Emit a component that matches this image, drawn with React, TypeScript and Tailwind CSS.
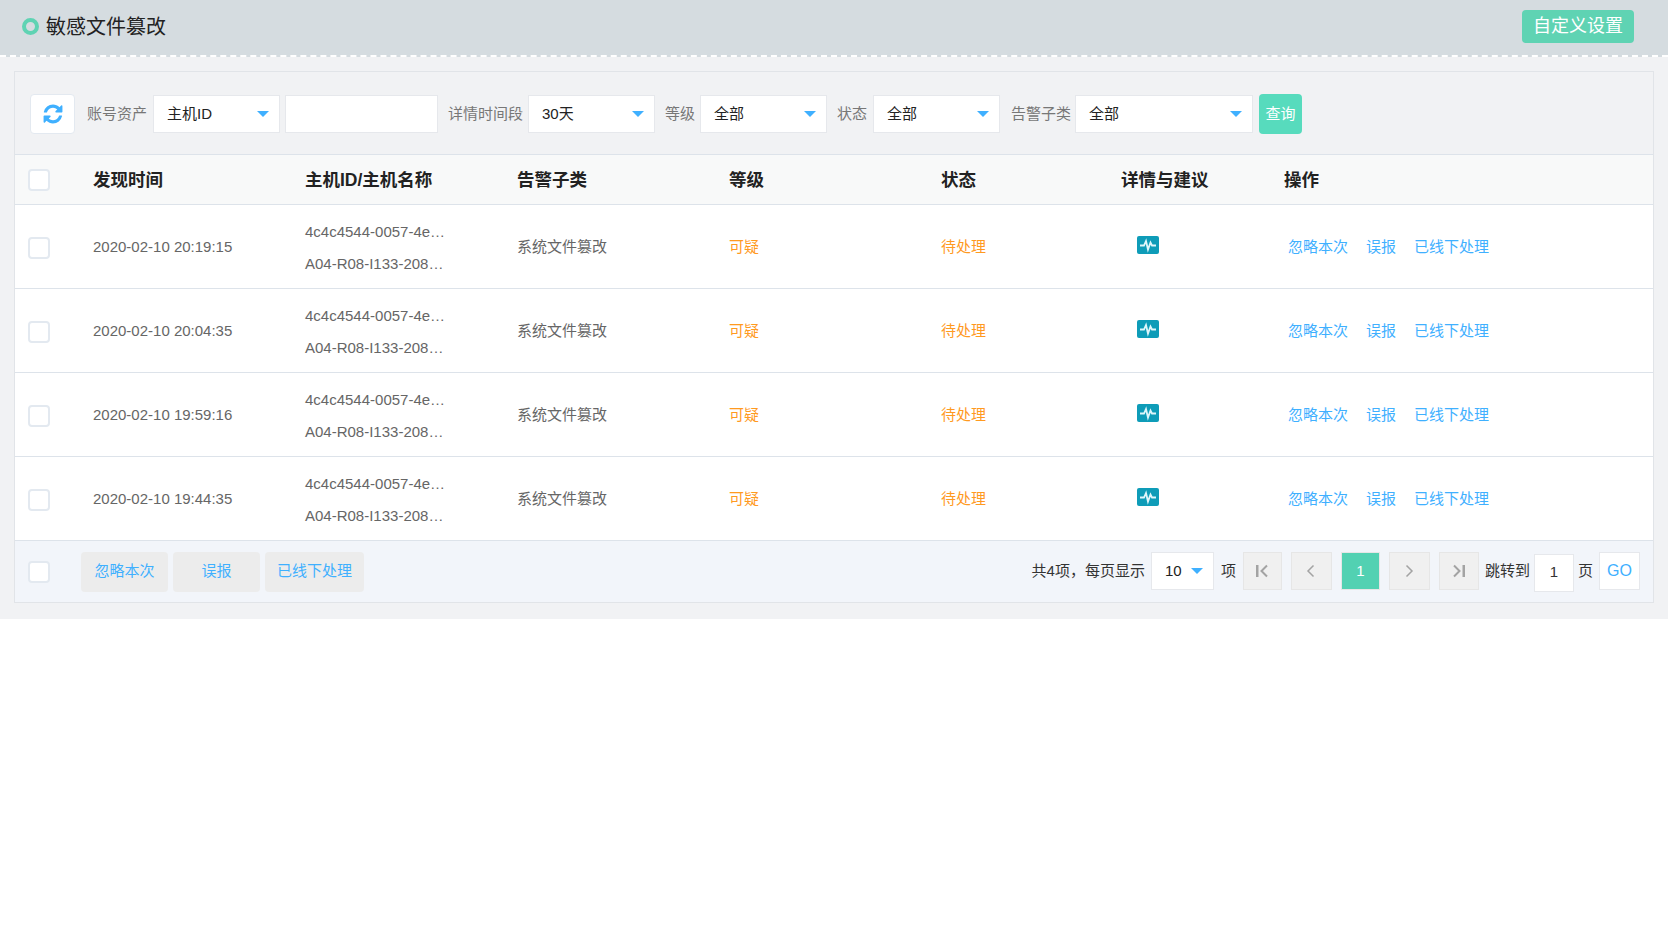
const rows = [
  { time: "2020-02-10 20:19:15" },
  { time: "2020-02-10 20:04:35" },
  { time: "2020-02-10 19:59:16" },
  { time: "2020-02-10 19:44:35" },
];

const gridCols = "grid grid-cols-[78px_212px_212px_212px_212px_180px_163px_1fr]";
const linkStyle = "text-[15px] text-[#3fb0ff]";

function Checkbox() {
  return <span className="block size-[22px] rounded-[4px] border-2 border-[#e3e9f0] bg-white" />;
}

function Caret() {
  return <span className="h-0 w-0 border-x-[6px] border-t-[6px] border-x-transparent border-t-[#3fb0ff]" />;
}

function Select({ value, className }: { value: string; className: string }) {
  return (
    <div className={`flex h-[38px] items-center justify-between border border-[#e6e8ec] bg-white pr-[10px] pl-[13px] text-[15px] text-[#222] ${className}`}>
      <span>{value}</span>
      <Caret />
    </div>
  );
}

function Label({ text, className }: { text: string; className: string }) {
  return <span className={`text-[15px] whitespace-nowrap text-[#777] ${className}`}>{text}</span>;
}

function RefreshIcon() {
  return (
    <svg width="22" height="22" viewBox="0 0 1792 1792" fill="#3fb0ff">
      <path d="M1639 1056q0 5-1 7-64 268-268 434.500t-478 166.500q-146 0-282.500-55t-243.500-157l-129 129q-19 19-45 19t-45-19-19-45v-448q0-26 19-45t45-19h448q26 0 45 19t19 45-19 45l-137 137q71 66 161 102t187 36q134 0 250-65t186-179q11-17 53-117 8-23 30-23h192q13 0 22.500 9.500t9.500 22.500zm25-800v448q0 26-19 45t-45 19h-448q-26 0-45-19t-19-45 19-45l138-138q-148-137-349-137-134 0-250 65t-186 179q-11 17-53 117-8 23-30 23h-199q-13 0-22.500-9.500t-9.500-22.500v-7q65-268 270-434.500t480-166.500q146 0 284 55.500t245 156.500l130-129q19-19 45-19t45 19 19 45z" />
    </svg>
  );
}

function PulseIcon() {
  return (
    <svg width="22" height="18" viewBox="0 0 22 18">
      <rect width="22" height="18" rx="2" fill="#0e9cb8" />
      <polyline points="3,9.5 7,9.5 9,5 11,13.500 13.500,6.500 15,9.500 19,9.500" fill="none" stroke="#dff6fa" strokeWidth="1.8" />
    </svg>
  );
}

function PageButton({ children, className = "" }: { children: React.ReactNode; className?: string }) {
  return (
    <span className={`flex h-[38px] items-center justify-center border border-[#e6e6e6] bg-[#f0f0f0] ${className}`}>
      {children}
    </span>
  );
}

function Glyph({ d }: { d: string }) {
  return (
    <svg width="16" height="16" viewBox="0 0 16 16" fill="none" stroke="#a3a3a3" strokeWidth="1.500">
      <path d={d} />
    </svg>
  );
}

function EdgeGlyph({ flip }: { flip?: boolean }) {
  return (
    <svg width="16" height="16" viewBox="0 0 16 16" className={flip ? "-scale-x-100" : ""}>
      <rect x="2" y="2" width="2.500" height="12" fill="#a3a3a3" />
      <path d="M13 2.500 7.500 8l5.500 5.500" fill="none" stroke="#a3a3a3" strokeWidth="2" />
    </svg>
  );
}

export default function App() {
  return (
    <div className="min-h-[925px] bg-white font-['Liberation_Sans','Noto_Sans_CJK_SC',sans-serif]">
      <div className="bg-[#f1f2f4] pb-4">
        {/* 标题栏 */}
        <header className="mb-[14px] flex h-[57px] items-center justify-between border-b-2 border-dashed border-white bg-[#d5dce0] pr-[34px] pb-[2px] pl-[22px]">
          <div className="flex items-center gap-[7px]">
            <span className="-mt-[1px] size-[17px] rounded-full border-[4px] border-[#5fd3b3]" />
            <span className="text-[20px] text-[#222]">敏感文件篡改</span>
          </div>
          <button className="h-[33px] w-[112px] rounded-[4px] bg-[#5fd3b3] text-[18px] text-white">自定义设置</button>
        </header>

        <div className="mx-[14px] border border-[#e1e4e8]">
          {/* 筛选 */}
          <div className="flex h-[83px] items-center border-b border-[#dde3ea] pt-[2px] pl-[15px]">
            <button className="flex h-[40px] w-[45px] items-center justify-center rounded-[4px] border border-[#e3e9f0] bg-white">
              <RefreshIcon />
            </button>
            <Label text="账号资产" className="ml-[12px]" />
            <Select value="主机ID" className="ml-[6px] w-[127px]" />
            <div className="ml-[5px] h-[38px] w-[153px] border border-[#e6e8ec] bg-white" />
            <Label text="详情时间段" className="ml-[10px]" />
            <Select value="30天" className="ml-[5px] w-[127px]" />
            <Label text="等级" className="ml-[10px]" />
            <Select value="全部" className="ml-[5px] w-[127px]" />
            <Label text="状态" className="ml-[10px]" />
            <Select value="全部" className="ml-[6px] w-[127px]" />
            <Label text="告警子类" className="ml-[11px]" />
            <Select value="全部" className="ml-[4px] w-[178px]" />
            <button className="ml-[6px] h-[40px] w-[43px] rounded-[4px] bg-[#57dbbd] text-[15px] text-white">查询</button>
          </div>

          {/* 表头 */}
          <div className={`${gridCols} h-[50px] items-center border-b border-[#dde3ea] bg-[#f8f9f9] pt-[2px] text-[17.5px] font-bold text-[#222]`}>
            <span className="-mt-[2px] pl-[13px]"><Checkbox /></span>
            <span>发现时间</span>
            <span>主机ID/主机名称</span>
            <span>告警子类</span>
            <span>等级</span>
            <span>状态</span>
            <span>详情与建议</span>
            <span>操作</span>
          </div>

          {/* 列表 */}
          {rows.map((row) => (
            <div key={row.time} className={`${gridCols} h-[84px] items-center border-b border-[#dde3ea] bg-white pt-[2px] text-[15px] text-[#666]`}>
              <span className="pl-[13px]"><Checkbox /></span>
              <span>{row.time}</span>
              <div className="flex flex-col gap-[14px] leading-[18px] whitespace-nowrap">
                <span>4c4c4544-0057-4e…</span>
                <span>A04-R08-I133-208…</span>
              </div>
              <span>系统文件篡改</span>
              <span className="text-[#ff9a1f]">可疑</span>
              <span className="text-[#ff9a1f]">待处理</span>
              <span className="-mt-[5px] pl-[16px]"><PulseIcon /></span>
              <div className="flex gap-[18px] pl-[4px] whitespace-nowrap">
                <a className={linkStyle}>忽略本次</a>
                <a className={linkStyle}>误报</a>
                <a className={linkStyle}>已线下处理</a>
              </div>
            </div>
          ))}

          {/* 底部操作 + 分页 */}
          <div className="flex h-[61px] items-center justify-between bg-[#f2f5fa] px-[13px]">
            <div className="flex items-center">
              <Checkbox />
              <div className="ml-[31px] flex gap-[5px]">
                <button className={`h-[40px] w-[87px] rounded-[4px] bg-[#ececec] ${linkStyle}`}>忽略本次</button>
                <button className={`h-[40px] w-[87px] rounded-[4px] bg-[#ececec] ${linkStyle}`}>误报</button>
                <button className={`h-[40px] w-[99px] rounded-[4px] bg-[#ececec] ${linkStyle}`}>已线下处理</button>
              </div>
            </div>
            <div className="-mt-[1px] flex items-center text-[15px] text-[#333]">
              <span>共4项，每页显示</span>
              <Select value="10" className="ml-[6px] w-[63px]" />
              <span className="ml-[7px]">项</span>
              <PageButton className="ml-[7px] w-[39px]"><EdgeGlyph /></PageButton>
              <PageButton className="ml-[9px] w-[41px]"><Glyph d="M10.500 2.500 5 8l5.500 5.500" /></PageButton>
              <span className="ml-[9px] flex h-[38px] w-[39px] items-center justify-center border border-[#e6e6e6] bg-[#52d1b2] text-white">1</span>
              <PageButton className="ml-[9px] w-[41px]"><Glyph d="M5.500 2.500 11 8l-5.500 5.500" /></PageButton>
              <PageButton className="ml-[9px] w-[40px]"><EdgeGlyph flip /></PageButton>
              <span className="ml-[6px]">跳转到</span>
              <span className="mt-[3px] ml-[4px] flex h-[38px] w-[40px] items-center justify-center border border-[#e6e8ec] bg-white text-[#333]">1</span>
              <span className="ml-[4px]">页</span>
              <span className="ml-[6px] flex h-[38px] w-[41px] items-center justify-center border border-[#e6e8ec] bg-white text-[16px] text-[#3fb0ff]">GO</span>
            </div>
          </div>
        </div>
      </div>
    </div>
  );
}
